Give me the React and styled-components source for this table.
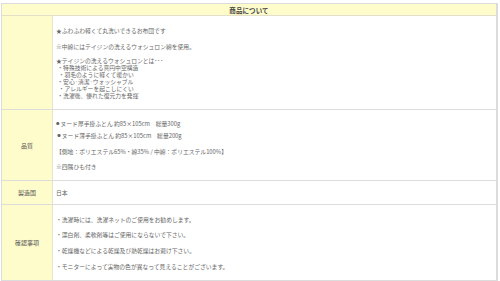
import React from 'react';
import styled, { createGlobalStyle } from 'styled-components';

const GlobalStyle = createGlobalStyle`
  body {
    margin: 0;
    background: #fff;
    font-family: "Noto Sans CJK JP", "Noto Sans", sans-serif;
  }
`;

const Page = styled.div`
  width: 500px;
  height: 281px;
  padding: 3px 2px 0 1px;
  box-sizing: border-box;
`;

const Table = styled.div`
  display: grid;
  grid-template-columns: 51px 1fr;
  grid-template-rows: 12px 94px 71px 24px 75px;
  border: 1px solid #dcdcdc;
  border-bottom-width: 2px;
  border-right-width: 2px;
  box-sizing: border-box;
`;

const Header = styled.div`
  grid-column: 1 / 3;
  background: #fffccc;
  border-bottom: 1px solid #e2e0c8;
  display: flex;
  align-items: center;
  justify-content: center;
  font-size: 6.5px;
  font-weight: bold;
  color: #444;
  letter-spacing: 0.1px;
`;

const Label = styled.div`
  background: #fffccc;
  border-right: 1px solid #e6e4cc;
  border-bottom: ${(p) => (p.last ? 'none' : '1px solid #dcdcdc')};
  display: flex;
  align-items: center;
  justify-content: center;
  font-size: 6px;
  color: #555;
`;

const Cell = styled.div`
  border-bottom: ${(p) => (p.last ? 'none' : '1px solid #dcdcdc')};
  display: flex;
  flex-direction: column;
  justify-content: center;
  padding-left: 3px;
  font-size: 5.8px;
  color: #666;
`;

const Line = styled.div`
  line-height: 7px;
  height: 7px;
  white-space: pre;
  margin-top: ${(p) => p.mt || 0}px;
`;

const Dot = styled.span`
  font-size: 3.5px;
  vertical-align: 1px;
  margin-right: 1px;
`;

export default function App() {
  return (
    <Page>
      <GlobalStyle />
      <Table>
        <Header>商品について</Header>

        <Label />
        <Cell>
          <Line>★ふわふわ軽くて丸洗いできるお布団です</Line>
          <Line mt={9}>※中綿にはテイジンの洗えるウォシュロン綿を使用。</Line>
          <Line mt={7}>★テイジンの洗えるウォシュロンとは･･･</Line>
          <Line> ・特殊技術による真円中空構造</Line>
          <Line>  ・羽毛のように軽くて暖かい</Line>
          <Line> ・安心·清潔·ウォッシャブル</Line>
          <Line>  ・アレルギーを起こしにくい</Line>
          <Line> ・洗濯後、優れた復元力を発揮</Line>
        </Cell>

        <Label>品質</Label>
        <Cell>
          <Line><Dot>●</Dot>ヌード厚手掛ふとん 約85×105cm　総量300g</Line>
          <Line mt={5}> <Dot>●</Dot>ヌード薄手掛ふとん 約85×105cm　総量200g</Line>
          <Line mt={9}>【側地：ポリエステル65%・綿35% / 中綿：ポリエステル100%】</Line>
          <Line mt={8}>※四隅ひも付き</Line>
        </Cell>

        <Label>製造国</Label>
        <Cell>
          <Line>日本</Line>
        </Cell>

        <Label last>確認事項</Label>
        <Cell last>
          <Line>・洗濯時には、洗濯ネットのご使用をお勧めします。</Line>
          <Line mt={8}>・漂白剤、柔軟剤等はご使用にならないで下さい。</Line>
          <Line mt={9}>・乾燥機などによる乾燥及び熱乾燥はお避け下さい。</Line>
          <Line mt={9}>・モニターによって実物の色が異なって見えることがございます。</Line>
        </Cell>
      </Table>
    </Page>
  );
}
